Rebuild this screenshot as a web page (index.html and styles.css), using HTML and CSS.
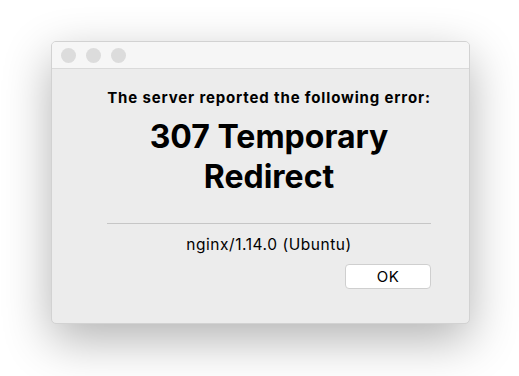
FILE: index.html
```html
<!DOCTYPE html>
<html lang="en">
  <head>
    <meta charset="UTF-8" />
    <title>Error</title>
    <link rel="stylesheet" href="styles.css">
  </head>
  <body>
    <div class="window">
      <div class="titlebar">
        <span class="light"></span>
        <span class="light"></span>
        <span class="light"></span>
      </div>
      <div class="content">
        <p class="intro">The server reported the following error:</p>
        <h1 class="status">307 Temporary Redirect</h1>
        <hr class="rule" />
        <p class="server">nginx/1.14.0 (Ubuntu)</p>
        <div class="actions">
          <button class="ok">OK</button>
        </div>
      </div>
    </div>
  </body>
</html>
```

FILE: styles.css
```css
/* Layout */
html,
body {
  margin: 0;
  padding: 0;
  height: 100%;
  background: #fff;
  font-family: Inter, "Noto Sans", sans-serif;
  color: #000;
}
body {
  box-sizing: border-box;
  padding: 41px 0 0 51px;
}
/* Window */
.window {
  width: 419px;
  height: 283px;
  box-sizing: border-box;
  background: #ececec;
  border: 1px solid #d2d2d2;
  border-radius: 5px;
  box-shadow: 0 16px 48px rgba(0, 0, 0, 0.3);
  overflow: hidden;
}
.titlebar {
  height: 26px;
  background: #f6f6f6;
  border-bottom: 1px solid #dadada;
  display: flex;
  align-items: center;
  gap: 10px;
  padding-left: 9px;
}
.light {
  width: 15px;
  height: 15px;
  border-radius: 50%;
  background: #dcdcdc;
}
/* Content */
.content {
  padding: 19px 38px 0 55px;
  text-align: center;
}
.intro {
  margin: 0;
  font-size: 15px;
  font-weight: 700;
  line-height: 20px;
  letter-spacing: 0.85px;
  white-space: nowrap;
}
.status {
  margin: 9px 0 0;
  font-size: 32px;
  font-weight: 700;
  line-height: 40px;
  padding: 0 40px;
}
.rule {
  margin: 26px 0 0;
  border: none;
  border-top: 1px solid #c6c6c6;
}
.server {
  margin: 11px 0 0;
  font-size: 15.5px;
  line-height: 20px;
  letter-spacing: 0.55px;
}
.actions {
  display: flex;
  justify-content: flex-end;
  margin-top: 9px;
}
.ok {
  width: 86px;
  height: 25px;
  background: #fff;
  border: 1px solid #cfcfcf;
  border-radius: 4px;
  font-family: inherit;
  font-size: 15px;
  letter-spacing: 0.5px;
  color: #000;
  padding: 0;
}
```
